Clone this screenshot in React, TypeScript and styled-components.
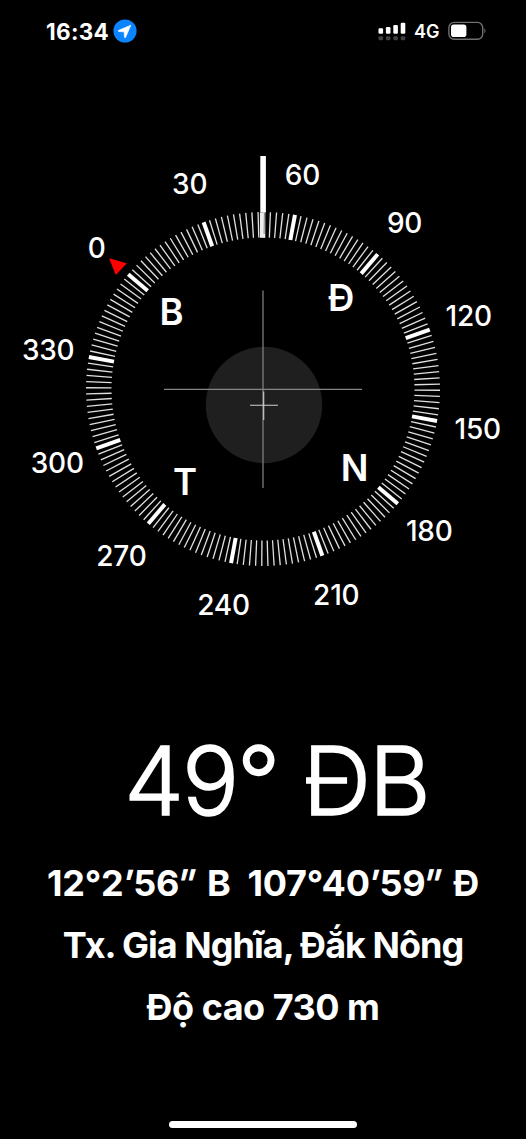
import React from "react";
import styled, { createGlobalStyle } from "styled-components";

const GlobalStyle = createGlobalStyle`
  * { box-sizing: border-box; }
  body { margin: 0; background: #000; }
`;

const Screen = styled.main`
  display: flex;
  flex-direction: column;
  align-items: center;
  width: 526px;
  height: 1139px;
  overflow: hidden;
  background: #000;
  color: #fff;
  font-family: Inter, "Liberation Sans", sans-serif;
`;

const StatusBar = styled.header`
  display: flex;
  align-items: center;
  justify-content: space-between;
  width: 100%;
  height: 62px;
  padding: 0 39px 0 45px;
`;

const StatusGroup = styled.div`
  display: flex;
  align-items: center;
`;

const Time = styled.span`
  width: 67px;
  margin-left: 1px;
  font-size: 22.5px;
  font-weight: 700;
  letter-spacing: 0.3px;
  white-space: nowrap;
`;

const Network = styled.span`
  width: 26px;
  margin: 1px 8px 0 8px;
  font-size: 18px;
  font-weight: 600;
  letter-spacing: 0;
`;

const Dial = styled.svg`
  display: block;
  flex: none;
  margin-top: 78px;
`;

const DialText = styled.text<{ $size: number; $weight: number }>`
  fill: #fff;
  font-size: ${(p) => p.$size}px;
  font-weight: ${(p) => p.$weight};
  letter-spacing: -0.2px;
  text-anchor: middle;
`;

const Readout = styled.section`
  display: flex;
  flex-direction: column;
  align-items: center;
  width: 100%;
  margin-top: 95px;
`;

const Heading = styled.h1`
  margin: 0 0 0 27px;
  font-size: 95px;
  font-weight: 300;
  line-height: 100px;
  letter-spacing: -2.1px;
  -webkit-text-stroke: 1.5px #fff;
  white-space: pre;
`;

const Detail = styled.p<{ $tracking?: number }>`
  margin: 0;
  font-size: 36px;
  font-weight: 700;
  line-height: 62px;
  letter-spacing: ${(p) => p.$tracking ?? 0}px;
  white-space: pre;
`;

const Prime = styled.span<{ $double?: boolean }>`
  display: inline-block;
  transform: ${(p) => (p.$double ? "translateX(-1.5px) skewX(-8deg) scaleX(0.78)" : "skewX(-6deg)")};
  -webkit-text-stroke: ${(p) => (p.$double ? 1 : 0)}px #fff;
`;

const Details = styled.div`
  display: flex;
  flex-direction: column;
  align-items: center;
  margin-top: 21px;
`;

const HomeIndicator = styled.div`
  width: 188px;
  height: 7px;
  margin-top: auto;
  margin-bottom: 11px;
  border-radius: 4px;
  background: #fff;
`;

const HEADING = 49.6;
const CX = 263;
const CY = 249;

const polar = (degrees: number, radius: number) => {
  const a = ((degrees - HEADING) * Math.PI) / 180;
  return { x: CX + radius * Math.sin(a), y: CY - radius * Math.cos(a) };
};

const ticks = Array.from({ length: 180 }, (_, i) => i * 2);
const labels = Array.from({ length: 12 }, (_, i) => i * 30);
const cardinals = ["B", "Đ", "N", "T"];

const LocationBadge = () => (
  <svg width="24" height="24" viewBox="0 0 24 24">
    <circle cx="12" cy="12" r="11.6" fill="#0a84ff" />
    <path d="M17.8 6.2 L5.4 11.5 Q4.9 12.2 5.7 12.5 L11.2 12.8 L11.5 18.3 Q11.9 19 12.5 18.4 Z" fill="#fff" stroke="#fff" strokeWidth="0.7" strokeLinejoin="round" />
  </svg>
);

const Signal = () => (
  <svg width="28" height="19" viewBox="0 0 28 19">
    {[0, 1, 2, 3].map((i) => (
      <g key={i}>
        <rect x={0.5 + i * 7.4} y={[6.3, 5, 3, 0.8][i]} width="4.6" height={[5.4, 6.7, 8.7, 10.9][i]} rx="1.2" fill="#fff" />
        <rect x={0.5 + i * 7.4} y="14.2" width="4.6" height="4" rx="1.2" fill="#404040" />
      </g>
    ))}
  </svg>
);

const Battery = () => (
  <svg width="39" height="20" viewBox="0 0 39 20">
    <rect x="0.9" y="1.4" width="33.8" height="16.8" rx="5.2" fill="none" stroke="#707070" strokeWidth="1.4" />
    <rect x="3" y="3.6" width="15.4" height="12.4" rx="2.8" fill="#fff" />
    <path d="M36.4 7 Q38.6 9.8 36.4 12.6 Z" fill="#707070" />
  </svg>
);

const CompassDial = () => (
  <Dial width="526" height="496" viewBox="0 0 526 496">
    <circle cx="264" cy="265" r="58.2" fill="#1f1f1f" />
    <path d="M164 249.3 H362 M263 150.5 V348" stroke="#858585" strokeWidth="1.2" />
    <path d="M250 265.2 H278 M263.7 251.5 V280" stroke="#d0d0d0" strokeWidth="1.1" />
    {ticks.map((d) => {
      const major = d % 30 === 0;
      const a = polar(d, 151.5);
      const b = polar(d, 177);
      return <line key={d} x1={a.x} y1={a.y} x2={b.x} y2={b.y} stroke={major ? "#fff" : "#e0e0e0"} strokeWidth={major ? 4 : 1.3} />;
    })}
    <path d="M263.1 16 V72.5" stroke="#fff" strokeWidth="5.6" />
    <path d="M262.6 72.5 V97.8" stroke="#ececec" strokeWidth="5.4" />
    <path d="M264.4 72.5 L264.1 94" stroke="#777" strokeWidth="0.9" />
    <path d="M109 118.2 L126.8 123.2 L115.8 135 Z" fill="#f00" />
    {labels.map((d) => {
      const p = polar(d, 218.4);
      return <DialText key={d} x={p.x} y={p.y + 10.7} $size={28} $weight={500}>{d}</DialText>;
    })}
    {cardinals.map((c, i) => {
      const p = polar(i * 90, 120.3);
      return <DialText key={c} x={p.x} y={p.y + 13.9} $size={36.5} $weight={600}>{c}</DialText>;
    })}
  </Dial>
);

export default function App() {
  return (
    <Screen>
      <GlobalStyle />
      <StatusBar>
        <StatusGroup>
          <Time>16:34</Time>
          <LocationBadge />
        </StatusGroup>
        <StatusGroup>
          <Signal />
          <Network>4G</Network>
          <Battery />
        </StatusGroup>
      </StatusBar>
      <CompassDial />
      <Readout>
        <Heading>49° ĐB</Heading>
        <Details>
          <Detail $tracking={-0.2}>
            12°2<Prime>′</Prime>56<Prime $double>″</Prime> B{"  "}107°40<Prime>′</Prime>59<Prime $double>″</Prime> Đ
          </Detail>
          <Detail $tracking={-0.98}>Tx. Gia Nghĩa, Đắk Nông</Detail>
          <Detail $tracking={-0.5}>Độ cao 730 m</Detail>
        </Details>
      </Readout>
      <HomeIndicator />
    </Screen>
  );
}
